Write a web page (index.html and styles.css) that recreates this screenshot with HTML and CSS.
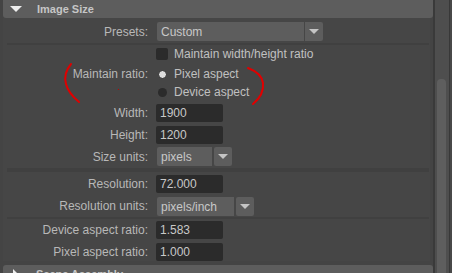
FILE: index.html
```html
<!DOCTYPE html>
<html>
<head>
    <title>Render Settings - Image Size</title>
    <link rel="stylesheet" href="styles.css">
</head>
<body>
    <div class="panel">
        <div class="frame-head open">
            <span class="arrow-down"></span>
            <span class="frame-title">Image Size</span>
        </div>

        <div class="frame-body">
            <div class="row h19">
                <label class="lbl">Presets:</label>
                <div class="combo">
                    <span class="combo-text wide">Custom</span>
                    <span class="combo-btn"><span class="tri"></span></span>
                </div>
            </div>

            <div class="sep"></div>

            <div class="row check-row">
                <span class="lbl"></span>
                <span class="checkbox"></span>
                <span class="opt">Maintain width/height ratio</span>
            </div>

            <div class="row radio-row first">
                <label class="lbl">Maintain ratio:</label>
                <span class="radio on"></span>
                <span class="opt">Pixel aspect</span>
            </div>
            <div class="row radio-row">
                <span class="lbl"></span>
                <span class="radio"></span>
                <span class="opt">Device aspect</span>
            </div>

            <div class="row h18 mt3">
                <label class="lbl">Width:</label>
                <span class="field">1900</span>
            </div>
            <div class="row h18 mt4">
                <label class="lbl">Height:</label>
                <span class="field">1200</span>
            </div>
            <div class="row h19 mt3">
                <label class="lbl">Size units:</label>
                <div class="combo">
                    <span class="combo-text small">pixels</span>
                    <span class="combo-btn gap"><span class="tri"></span></span>
                </div>
            </div>

            <div class="sep thick"></div>

            <div class="row h18 mt3">
                <label class="lbl">Resolution:</label>
                <span class="field">72.000</span>
            </div>
            <div class="row h18 mt4">
                <label class="lbl">Resolution units:</label>
                <div class="combo">
                    <span class="combo-text mid">pixels/inch</span>
                    <span class="combo-btn gap"><span class="tri"></span></span>
                </div>
            </div>

            <div class="sep"></div>

            <div class="row h18 mt2">
                <label class="lbl">Device aspect ratio:</label>
                <span class="field">1.583</span>
            </div>
            <div class="row h18 mt4">
                <label class="lbl">Pixel aspect ratio:</label>
                <span class="field">1.000</span>
            </div>
        </div>

        <div class="frame-head closed">
            <span class="arrow-right"></span>
            <span class="frame-title">Scene Assembly</span>
        </div>
    </div>

    <div class="scrollbar">
        <div class="thumb"></div>
    </div>
    <div class="edge"></div>

    <!-- red pen marks drawn on top of the screenshot -->
    <svg class="marks" width="452" height="273" viewBox="0 0 452 273">
        <path d="M71 64 C66 70 64 77 66 84 C68 92 73 97 79 102" fill="none" stroke="#e00000" stroke-width="2" stroke-linecap="round"/>
        <path d="M248 68 C256 71 262 76 263 83 C264 92 259 99 253 104" fill="none" stroke="#e00000" stroke-width="2" stroke-linecap="round"/>
        <rect x="118" y="89" width="1" height="1" fill="#c00000"/>
    </svg>
</body>
</html>
```

FILE: styles.css
```css
body { margin: 0; background: #444444; font-family: "Liberation Sans", Arial, sans-serif; font-size: 12px; color: #bbbbbb; display: flex; width: 452px; height: 273px; overflow: hidden; position: relative; }
.panel { width: 433px; flex: none; }
.frame-head { margin-left: 3px; width: 430px; height: 18px; background: #5d5d5d; display: flex; align-items: center; border-radius: 0 0 3px 3px; }
.frame-head.closed { margin-top: 4px; border-radius: 3px 3px 0 0; }
.frame-title { margin-left: 15px; font-weight: bold; font-size: 11px; color: #c6c6c6; }
.arrow-down { margin-left: 7px; width: 0; height: 0; border-left: 6px solid transparent; border-right: 6px solid transparent; border-top: 6px solid #eeeeee; }
.arrow-right { margin-left: 10px; margin-right: 3px; width: 0; height: 0; border-top: 5px solid transparent; border-bottom: 5px solid transparent; border-left: 5px solid #eeeeee; }
.frame-body { margin-left: 3px; width: 427px; padding-top: 4px; background: #464646; }
.row { display: flex; align-items: center; }
.h18 { height: 18px; }
.h19 { height: 19px; }
.mt2 { margin-top: 2px; }
.mt3 { margin-top: 3px; }
.mt4 { margin-top: 4px; }
.lbl { width: 145px; flex: none; text-align: right; margin-right: 8px; color: #b8b8b8; }
.field { width: 63px; height: 18px; line-height: 19px; padding-left: 4px; background: #2b2b2b; border-radius: 2px; color: #c8c8c8; }
.combo { display: flex; height: 19px; margin-left: 1px; }
.combo-text { height: 19px; line-height: 20px; padding-left: 4px; background: #5d5d5d; border-radius: 2px 0 0 2px; color: #c8c8c8; }
.combo-text.wide { width: 143px; }
.combo-text.small { width: 51px; }
.combo-text.mid { width: 73px; }
.combo-btn { width: 18px; height: 19px; margin-left: 1px; background: #5d5d5d; border-radius: 0 2px 2px 0; display: flex; align-items: center; justify-content: center; }
.combo-btn.gap { margin-left: 2px; border-radius: 2px; }
.tri { width: 0; height: 0; border-left: 5px solid transparent; border-right: 5px solid transparent; border-top: 5px solid #c4c4c4; }
.sep { margin: 2px 0 0 4px; width: 422px; height: 2px; background: #404040; }
.sep.thick { height: 4px; }
.check-row { margin-top: 3px; height: 12px; }
.checkbox { width: 12px; height: 12px; margin-left: 0; background: #2b2b2b; border-radius: 2px; }
.check-row .opt { margin-left: 6px; }
.radio-row { height: 18px; }
.radio-row.first { margin-top: 5px; }
.radio { width: 9px; height: 9px; margin-left: 2px; border-radius: 50%; background: #2b2b2b; box-sizing: border-box; }
.radio.on { background: #dddddd; border: 1px solid #2b2b2b; }
.radio-row .opt { margin-left: 7px; }
.opt { color: #c0c0c0; }
.scrollbar { width: 16px; flex: none; background: #4e4e4e; border-left: 2px solid #3a3a3a; box-sizing: border-box; position: relative; }
.thumb { margin: 79px 0 0 2px; width: 9px; height: 200px; background: #5e5e5e; border-radius: 4px 4px 0 0; }
.edge { width: 3px; flex: none; background: #484848; border-left: 1px solid #383838; box-sizing: border-box; }
.marks { position: absolute; left: 0; top: 0; pointer-events: none; }
```
